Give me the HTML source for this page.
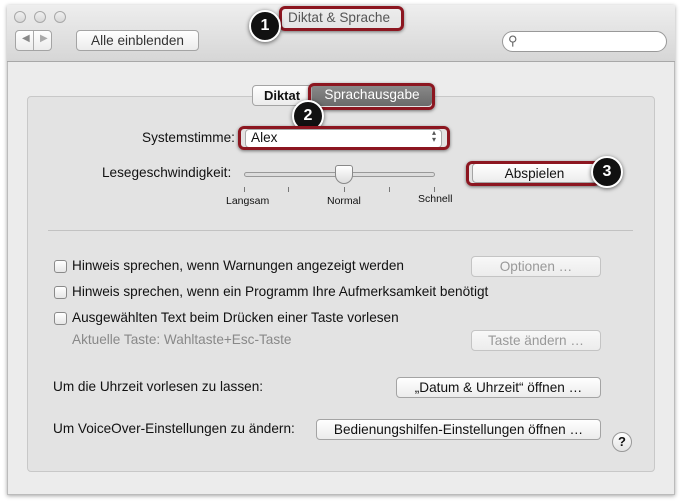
<!DOCTYPE html>
<html><head><style>
*{box-sizing:border-box;margin:0;padding:0}
body{width:682px;height:502px;background:#fff;font-family:"Liberation Sans",sans-serif;font-size:13.6px;color:#111;position:relative;overflow:hidden}
.a{position:absolute;white-space:nowrap}
.win{position:absolute;left:7px;top:5px;width:668px;height:490px;background:#ececec;border:1px solid #bbb;box-shadow:0 1px 4px rgba(0,0,0,.35)}
.tb{position:absolute;left:7px;top:5px;width:668px;height:57px;background:linear-gradient(#eeeeee,#d6d6d6);border-bottom:1px solid #a8a8a8}
.light{position:absolute;top:11px;width:12px;height:12px;border-radius:50%;border:1px solid #a8a8a8;background:linear-gradient(#f0f0f0,#d8d8d8)}
.btn{position:absolute;border:1px solid #a4a4a4;border-radius:4px;background:linear-gradient(#fff,#ececec);text-align:center;font-size:13.6px;line-height:19px;height:21px}
.dis{color:#999;border-color:#c4c4c4;background:linear-gradient(#f8f8f8,#ececec)}
.box{position:absolute;left:27px;top:96px;width:628px;height:376px;background:#e3e3e3;border:1px solid #c8c8c8;border-radius:4px}
.red{position:absolute;border:3px solid #8c1620;border-radius:6px;box-shadow:0 1px 3px rgba(0,0,0,.5)}
.num{position:absolute;width:32px;height:32px;border-radius:50%;background:#111;border:2px solid #fff;box-shadow:0 1px 4px rgba(0,0,0,.6);color:#fff;font-size:16px;font-weight:bold;text-align:center;line-height:28px}
.cb{position:absolute;width:13px;height:13px;border:1px solid #8a8a8a;border-radius:3px;background:linear-gradient(#fff,#e6e6e6)}
.tick{position:absolute;width:1px;height:5px;background:#777}
</style></head><body>
<div class="win"></div>
<div class="tb"></div>
<div class="light" style="left:14px"></div>
<div class="light" style="left:34px"></div>
<div class="light" style="left:54px"></div>
<div class="btn" style="left:15px;top:30px;width:37px;height:21px"></div>
<div class="a" style="left:22px;top:33px;color:#888;font-size:10px">◀</div>
<div class="a" style="left:33px;top:31px;width:1px;height:19px;background:#aaa"></div>
<div class="a" style="left:40px;top:33px;color:#aaa;font-size:10px">▶</div>
<div class="btn" style="left:76px;top:30px;width:123px;color:#333">Alle einblenden</div>
<div class="a" style="left:502px;top:31px;width:165px;height:21px;border:1px solid #999;border-radius:11px;background:#fff"></div>
<div class="a" style="left:508px;top:33px;color:#666;font-size:13px">⚲</div>
<div class="red" style="left:279px;top:6px;width:125px;height:25px"></div>
<div class="a" style="left:288px;top:10px;color:#555;font-size:13.6px">Diktat &amp; Sprache</div>
<div class="num" style="left:249px;top:10px">1</div>
<div class="box"></div>
<div class="btn" style="left:252px;top:85px;width:60px;height:21px;font-weight:bold;color:#111;font-size:13px">Diktat</div>
<div class="a" style="left:312px;top:85px;width:120px;height:21px;background:linear-gradient(#8a8a8a,#6a6a6a);border-radius:0 4px 4px 0;color:#fff;text-align:center;line-height:20px;font-size:13.6px">Sprachausgabe</div>
<div class="red" style="left:308px;top:83px;width:127px;height:27px"></div>
<div class="num" style="left:292px;top:100px">2</div>
<div class="a" style="left:142px;top:130px">Systemstimme:</div>
<div class="a" style="left:245px;top:129px;width:197px;height:19px;background:#fff;border:1px solid #aaa;border-radius:4px"></div>
<div class="a" style="left:251px;top:130px">Alex</div>
<div class="a" style="left:432px;top:129px;font-size:8px;line-height:7px;color:#555">▴<br>▾</div>
<div class="red" style="left:238px;top:126px;width:212px;height:24px"></div>
<div class="a" style="left:102px;top:165px">Lesegeschwindigkeit:</div>
<div class="a" style="left:244px;top:172px;width:191px;height:5px;border:1px solid #999;border-radius:3px;background:#ddd"></div>
<div class="a" style="left:335px;top:165px;width:18px;height:19px;background:linear-gradient(#fff,#ddd);border:1px solid #888;border-radius:3px 3px 9px 9px"></div>
<div class="tick" style="left:288px;top:187px"></div><div class="tick" style="left:244px;top:187px"></div><div class="tick" style="left:344px;top:187px"></div><div class="tick" style="left:389px;top:187px"></div><div class="tick" style="left:434px;top:187px"></div>
<div class="a" style="left:226px;top:195px;font-size:10.5px">Langsam</div>
<div class="a" style="left:327px;top:195px;font-size:10.5px">Normal</div>
<div class="a" style="left:418px;top:193px;font-size:10.5px">Schnell</div>
<div class="btn" style="left:472px;top:163px;width:125px;height:20px">Abspielen</div>
<div class="red" style="left:466px;top:161px;width:134px;height:25px"></div>
<div class="num" style="left:591px;top:156px">3</div>
<div class="a" style="left:48px;top:230px;width:585px;height:1px;background:#c2c2c2"></div>
<div class="cb" style="left:54px;top:260px"></div><div class="a" style="left:72px;top:258px">Hinweis sprechen, wenn Warnungen angezeigt werden</div>
<div class="btn dis" style="left:471px;top:256px;width:130px">Optionen …</div>
<div class="cb" style="left:54px;top:286px"></div><div class="a" style="left:72px;top:284px">Hinweis sprechen, wenn ein Programm Ihre Aufmerksamkeit benötigt</div>
<div class="cb" style="left:54px;top:312px"></div><div class="a" style="left:72px;top:310px">Ausgewählten Text beim Drücken einer Taste vorlesen</div>
<div class="a" style="left:72px;top:332px;color:#888">Aktuelle Taste: Wahltaste+Esc-Taste</div>
<div class="btn dis" style="left:471px;top:330px;width:130px">Taste ändern …</div>
<div class="a" style="left:53px;top:379px">Um die Uhrzeit vorlesen zu lassen:</div>
<div class="btn" style="left:396px;top:377px;width:205px">„Datum &amp; Uhrzeit“ öffnen …</div>
<div class="a" style="left:53px;top:421px">Um VoiceOver-Einstellungen zu ändern:</div>
<div class="btn" style="left:316px;top:419px;width:285px">Bedienungshilfen-Einstellungen öffnen …</div>
<div class="a" style="left:612px;top:432px;width:20px;height:20px;border-radius:50%;border:1px solid #999;background:linear-gradient(#fff,#e4e4e4);text-align:center;font-weight:bold;line-height:18px;font-size:13px">?</div>
</body></html>
